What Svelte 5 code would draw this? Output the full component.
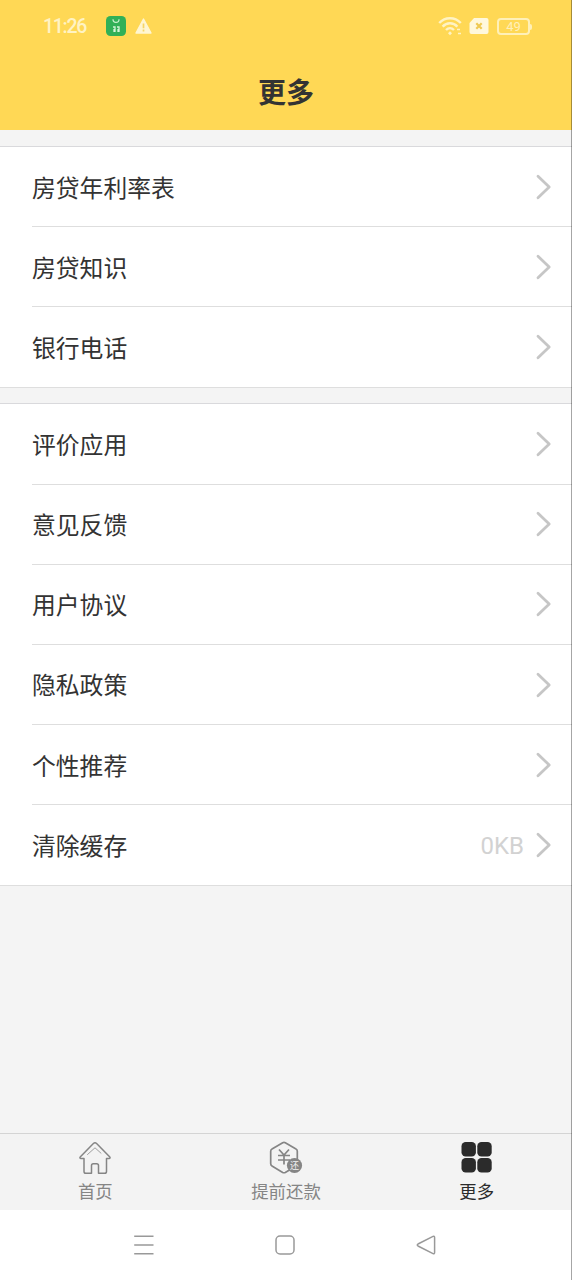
<script>
  const groups = [
    [
      { label: "房贷年利率表" },
      { label: "房贷知识" },
      { label: "银行电话" },
    ],
    [
      { label: "评价应用" },
      { label: "意见反馈" },
      { label: "用户协议" },
      { label: "隐私政策" },
      { label: "个性推荐" },
      { label: "清除缓存", value: "0KB" },
    ],
  ];

  const tabs = [
    { id: "home", label: "首页" },
    { id: "repay", label: "提前还款" },
    { id: "more", label: "更多" },
  ];

  let current = $state("more");
</script>

<div class="screen">
  <header>
    <div class="status">
      <span class="time">11:26</span>
      <svg class="app" width="20" height="20" viewBox="0 0 20 20" fill="none">
        <rect width="20" height="20" rx="4.5" fill="#31b057" />
        <path d="M7 3.2c0 4.3 6 4.3 6 0" stroke="#c9f2cf" stroke-width="1.2" />
        <path d="M7 11h2v5M11 11h2v5M8 13v3M12 13v3" stroke="#d4f5d8" stroke-width="1.3" />
      </svg>
      <svg class="alert" width="17" height="16" viewBox="0 0 17 16">
        <path d="M8.5 1 16 15H1z" fill="#fff6d2" stroke="#fff6d2" stroke-width="1.4" stroke-linejoin="round" />
        <path d="M8.5 5.5v4.8M8.5 11.6v1.8" stroke="#f5d566" stroke-width="1.7" />
      </svg>
      <div class="signals">
        <svg width="25" height="20" viewBox="0 0 25 20" fill="none" stroke="#fff3c4" stroke-width="2.4">
          <path d="M1.2 7c6-6.4 15.6-6.4 21.6 0" />
          <path d="M4.6 10.6c4.2-4.4 10.6-4.4 14.8 0" />
          <path d="M8 14c2.4-2.5 5.6-2.5 8 0" />
          <path d="M12 15.2l2 2-2 2-2-2z" fill="#fff3c4" stroke="none" />
          <path d="M19 13.5h3M20 17.5h3" stroke-width="1.6" />
        </svg>
        <svg class="sim" width="20" height="16" viewBox="0 0 20 16">
          <path d="M5 0h12.5a2 2 0 0 1 2 2v12a2 2 0 0 1-2 2h-15a2 2 0 0 1-2-2V5z" fill="#fff8dc" />
          <path d="M7.3 5.3l5.4 5.4M12.7 5.3l-5.4 5.4" stroke="#efc952" stroke-width="2.2" />
        </svg>
        <div class="battery">49</div>
      </div>
    </div>
    <h1>更多</h1>
  </header>

  <main>
    {#each groups as rows}
      <ul>
        {#each rows as row}
          <li>
            <span class="label">{row.label}</span>
            {#if row.value}
              <span class="value">{row.value}</span>
            {/if}
            <svg width="16" height="26" viewBox="0 0 16 26" fill="none">
              <path
                d="M2 2.2 13.2 13 2 23.8"
                stroke="#c6c6c6"
                stroke-width="2.8"
                stroke-linecap="round"
                stroke-linejoin="round"
              />
            </svg>
          </li>
        {/each}
      </ul>
    {/each}
  </main>

  <nav class="tabs">
    {#each tabs as tab}
      <button class:active={current === tab.id} onclick={() => (current = tab.id)}>
        {#if tab.id === "home"}
          <svg width="34" height="34" viewBox="0 0 34 34" fill="none" stroke="#858585" stroke-width="1.5" stroke-linejoin="round" stroke-linecap="round">
            <path d="M6 17.5H2.8q-1.600-.4-.4-1.800L15.400 2.500q1.600-1.400 3.200 0l13 13.200q1.200 1.400-.4 1.800H28.500V30.500q0 1.800-1.800 1.800H20.500V24.500q0-1.800-1.800-1.800h-3.400q-1.800 0-1.800 1.800v7.800H7.800Q6 32.300 6 30.500z" />
            <path d="M9.500 13.500 17 6.800l6 5.400" stroke-width="1" stroke="#a0a0a0" />
          </svg>
        {:else if tab.id === "repay"}
          <svg width="34" height="34" viewBox="0 0 34 34" fill="none" stroke="#858585" stroke-width="1.7">
            <path d="M13.7 1.7q1.3-.7 2.6 0L27 8q1.300.7 1.300 2.200v12.600q0 1.500-1.300 2.200l-10.700 6.400q-1.300.7-2.600 0L3 25q-1.300-.7-1.300-2.200V10.200Q1.700 8.700 3 8z" />
            <path d="M10 8.500l5 5.500 5-5.500M9 14.500h12M9 19h12M15 14v9.500" />
            <circle cx="25.5" cy="24.5" r="7.600" fill="#858585" stroke="none" />
            <text x="25.5" y="27.800" text-anchor="middle">还</text>
          </svg>
        {:else}
          <svg width="34" height="34" viewBox="0 0 34 34" fill="#2b2b2b">
            <rect x="1.500" y="1" width="14.400" height="14.600" rx="4.200" />
            <rect x="17.300" y="1" width="14.400" height="14.600" rx="4.200" />
            <rect x="1.500" y="17" width="14.400" height="14.600" rx="4.200" />
            <rect x="17.300" y="17" width="14.400" height="14.600" rx="4.200" />
          </svg>
        {/if}
        <span>{tab.label}</span>
      </button>
    {/each}
  </nav>

  <!-- Android navigation keys -->
  <div class="keys">
    <svg width="20" height="20" viewBox="0 0 20 20" stroke="#999" stroke-width="1.5">
      <path d="M.2 1.200h19.300M.2 10h19.300M.2 18.800h19.300" />
    </svg>
    <svg width="20" height="20" viewBox="0 0 20 20" fill="none" stroke="#999" stroke-width="1.5">
      <rect x="1" y="1" width="18" height="18" rx="4" />
    </svg>
    <svg width="20" height="20" viewBox="0 0 20 20" fill="none" stroke="#999" stroke-width="1.5">
      <path d="M2 9q-1.500 1 0 2l15 7.600q1.600.6 1.600-1V2.400q0-1.600-1.600-1z" />
    </svg>
  </div>
  <div class="edge"></div>
</div>

<style>
  .screen {
    position: relative;
    display: flex;
    flex-direction: column;
    width: 572px;
    height: 1280px;
    overflow: hidden;
    background: #f4f4f4;
    color: #333;
    font-family: Roboto, "Noto Sans CJK SC", sans-serif;
  }

  header {
    height: 130px;
    background: #ffd855;
  }

  .status {
    display: flex;
    align-items: center;
    height: 52px;
    padding: 0 42px 0 43px;
  }

  .time {
    width: 63px;
    color: #fff3c4;
    font-size: 19.5px;
    font-weight: 500;
    letter-spacing: -1.3px;
  }

  .alert {
    margin-left: 9px;
  }

  .signals {
    display: flex;
    align-items: center;
    margin-left: auto;
  }

  .sim {
    margin: 0 8px 0 6px;
  }

  .battery {
    position: relative;
    box-sizing: border-box;
    width: 33px;
    height: 17px;
    border: 2px solid #fff0b8;
    border-radius: 4px;
    color: #fff0b8;
    font-size: 13px;
    line-height: 14px;
    text-align: center;
  }

  .battery::after {
    content: "";
    position: absolute;
    top: 4px;
    right: -4px;
    width: 2px;
    height: 6px;
    border-radius: 0 2px 2px 0;
    background: #fff0b8;
  }

  h1 {
    margin: 22px 0 0;
    font-size: 28px;
    font-weight: 700;
    line-height: 40px;
    text-align: center;
  }

  main {
    display: flex;
    flex: 1;
    flex-direction: column;
    gap: 15px;
    padding-top: 16px;
  }

  ul {
    margin: 0;
    padding: 0;
    border-top: 1px solid #d9d9dc;
    border-bottom: 1px solid #dedede;
    background: #fff;
    list-style: none;
  }

  li {
    display: flex;
    align-items: center;
    box-sizing: border-box;
    height: 80.2px;
    margin-left: 32px;
    padding-right: 20px;
    border-bottom: 1px solid #dedede;
  }

  li:last-child {
    height: 80px;
    border-bottom: none;
  }

  .label {
    flex: 1;
    padding-bottom: 1.2px;
    font-size: 23.8px;
  }

  .value {
    margin-right: 12px;
    padding-top: 1px;
    color: #d2d2d2;
    font-size: 24px;
  }

  .tabs {
    display: flex;
    box-sizing: border-box;
    height: 77px;
    border-top: 1px solid #d4d4d4;
    background: #f3f3f3;
  }

  button {
    display: flex;
    flex: 1;
    flex-direction: column;
    align-items: center;
    padding: 7px 0 0;
    border: none;
    background: none;
    color: #858585;
    font-family: inherit;
    font-size: 17.4px;
    line-height: 34px;
  }

  button.active {
    color: #2b2b2b;
  }

  text {
    fill: #f3f3f3;
    stroke: none;
    font-size: 9px;
  }

  .keys {
    display: flex;
    align-items: center;
    justify-content: space-between;
    box-sizing: border-box;
    height: 70px;
    padding: 0 136px 0 134px;
    background: #fff;
  }

  /* hairline down the right side of the display */
  .edge {
    position: absolute;
    top: 0;
    right: 0;
    width: 1px;
    height: 100%;
    background: rgba(0, 0, 0, 0.35);
  }
</style>
